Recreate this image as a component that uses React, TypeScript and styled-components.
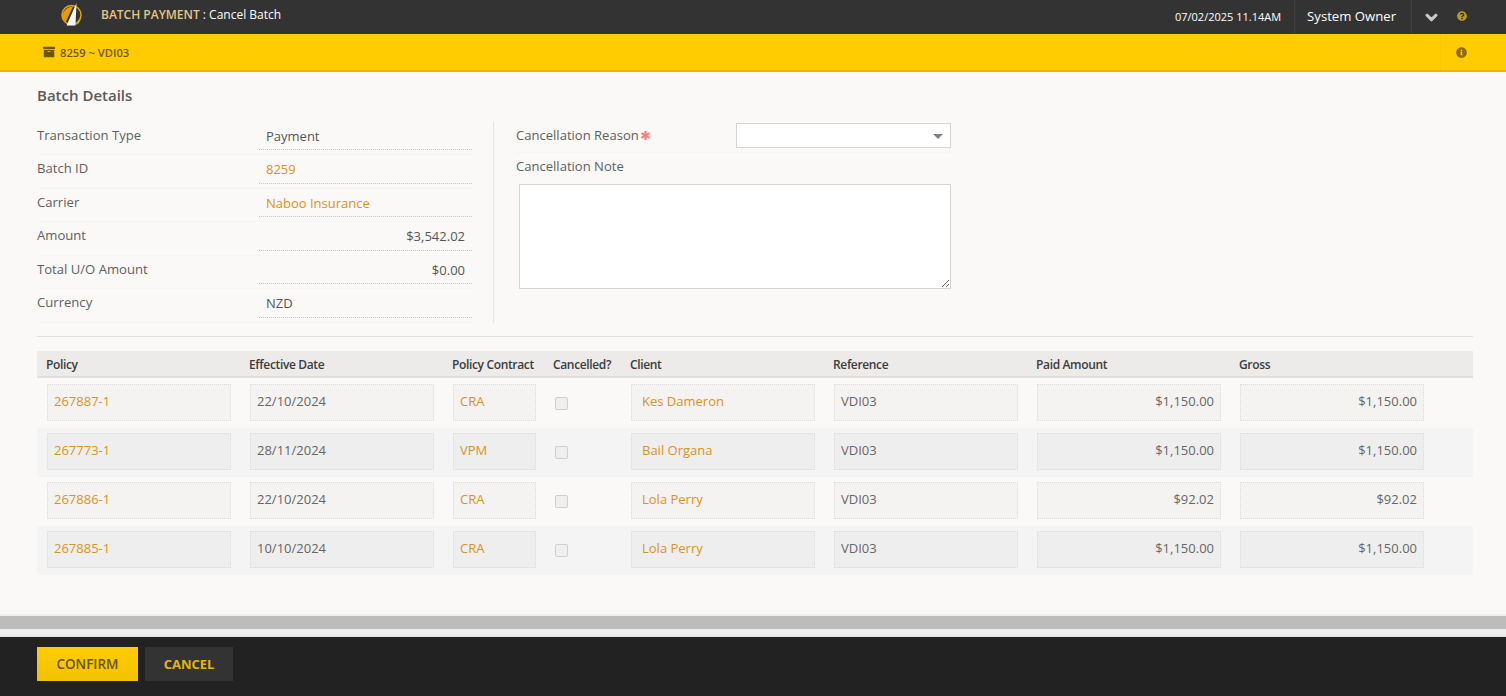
import styled, { createGlobalStyle } from "styled-components";
import { FaArchive, FaAsterisk, FaChevronDown, FaInfoCircle, FaQuestionCircle } from "react-icons/fa";

const details = [
  { label: "Transaction Type", value: "Payment" },
  { label: "Batch ID", value: "8259", link: true },
  { label: "Carrier", value: "Naboo Insurance", link: true },
  { label: "Amount", value: "$3,542.02", right: true },
  { label: "Total U/O Amount", value: "$0.00", right: true },
  { label: "Currency", value: "NZD" },
];

const rows = [
  { policy: "267887-1", date: "22/10/2024", contract: "CRA", client: "Kes Dameron", paid: "$1,150.00" },
  { policy: "267773-1", date: "28/11/2024", contract: "VPM", client: "Bail Organa", paid: "$1,150.00" },
  { policy: "267886-1", date: "22/10/2024", contract: "CRA", client: "Lola Perry", paid: "$92.02" },
  { policy: "267885-1", date: "10/10/2024", contract: "CRA", client: "Lola Perry", paid: "$1,150.00" },
];

const headers = ["Policy", "Effective Date", "Policy Contract", "Cancelled?", "Client", "Reference", "Paid Amount", "Gross"];

function App() {
  return (
    <Page>
      <GlobalStyle />
      <TopBar>
        <Brand>
          <Logo width="24" height="26" viewBox="0 0 24 26">
            <circle cx="11.5" cy="13" r="9.5" fill="none" stroke="#dba60f" strokeWidth="1.5" />
            <path d="M2 14C2.5 9 7.5 4.5 13 4.5L5.5 20.5C3.5 19 2 17 2 14Z" fill="#e89a06" />
            <path d="M16.5 1L15.5 23.5H6.5Z" fill="#f4f4f4" />
            <path d="M16 23L20.5 16C20.5 19 19 22 16 23Z" fill="#e3ae0e" />
          </Logo>
          <PageTitle>
            <b>BATCH PAYMENT</b> : Cancel Batch
          </PageTitle>
        </Brand>
        <TopRight>
          <DateText>07/02/2025 11.14AM</DateText>
          <UserName>System Owner</UserName>
          <MenuToggle>
            <BoldChevron size={13} />
          </MenuToggle>
          <HelpIcon>
            <FaQuestionCircle size={10} />
          </HelpIcon>
        </TopRight>
      </TopBar>

      <SubBar>
        <SubTitle>
          <FaArchive size={12} />
          8259 ~ VDI03
        </SubTitle>
        <InfoBox>
          <FaInfoCircle size={11} />
        </InfoBox>
      </SubBar>

      <Content>
        <SectionTitle>Batch Details</SectionTitle>
        <FormArea>
          <DetailList>
            {details.map((d) => (
              <DetailRow key={d.label}>
                <DetailLabel>{d.label}</DetailLabel>
                <DetailValue $link={d.link} $right={d.right}>{d.value}</DetailValue>
              </DetailRow>
            ))}
          </DetailList>
          <CancelForm>
            <ReasonRow>
              <FormLabel>
                Cancellation Reason
                <RequiredMark size={9} />
              </FormLabel>
              <SelectBox>
                <Caret />
              </SelectBox>
            </ReasonRow>
            <FormLabel>Cancellation Note</FormLabel>
            <NoteArea />
          </CancelForm>
        </FormArea>
        <Divider />
        <TableHead>
          {headers.map((h) => (
            <span key={h}>{h}</span>
          ))}
        </TableHead>
        {rows.map((r, i) => (
          <TableRow key={r.policy} $alt={i % 2 === 1}>
            <Cell $link>{r.policy}</Cell>
            <Cell>{r.date}</Cell>
            <Cell $link>{r.contract}</Cell>
            <CheckCell>
              <Check />
            </CheckCell>
            <Cell $link $indent>{r.client}</Cell>
            <Cell>VDI03</Cell>
            <Cell $right>{r.paid}</Cell>
            <Cell $right>{r.paid}</Cell>
          </TableRow>
        ))}
      </Content>

      <ScrollTrack />
      <Footer>
        <ConfirmButton>CONFIRM</ConfirmButton>
        <CancelButton>CANCEL</CancelButton>
      </Footer>
    </Page>
  );
}

const GlobalStyle = createGlobalStyle`
  html, body {
    margin: 0;
    padding: 0;
    overflow: hidden;
  }
  body {
    font-family: "Open Sans", "Liberation Sans", sans-serif;
    font-size: 13px;
    color: #555;
  }
`;

const Page = styled.div`
  display: flex;
  flex-direction: column;
  height: 696px;
  background: #faf9f7;
`;

const TopBar = styled.div`
  display: flex;
  justify-content: space-between;
  height: 34px;
  background: #333;
  color: #fff;
`;

const Brand = styled.div`
  display: flex;
  align-items: center;
  padding-left: 60px;
  gap: 17px;
`;

const Logo = styled.svg`
  display: block;
  margin-top: -4px;
`;

const PageTitle = styled.div`
  font-size: 12px;
  margin-top: -5px;

  b {
    color: #e3c782;
    font-weight: 600;
  }
`;

const TopRight = styled.div`
  display: flex;
  align-items: stretch;
`;

const DateText = styled.div`
  display: flex;
  align-items: center;
  font-size: 11px;
  padding: 0 13px 2px 0;
  border-right: 1px solid #3e3e3e;
`;

const UserName = styled.div`
  display: flex;
  align-items: center;
  font-size: 13.15px;
  padding: 0 15px 2px 12px;
  border-right: 1px solid #3e3e3e;
`;

const MenuToggle = styled.div`
  display: flex;
  align-items: center;
  padding-left: 13px;
  color: #ccc;
`;

const BoldChevron = styled(FaChevronDown)`
  stroke: currentColor;
  stroke-width: 40;
`;

const HelpIcon = styled.div`
  display: flex;
  align-items: center;
  padding: 0 39px 2px 19px;
  color: #bd9a1e;
`;

const SubBar = styled.div`
  display: flex;
  justify-content: space-between;
  align-items: center;
  height: 36px;
  padding: 0 39px 0 43px;
  background: #fecc00;
  border-bottom: 2px solid #e8b500;
  color: #8c6b07;
`;

const SubTitle = styled.div`
  display: flex;
  align-items: center;
  gap: 5px;
  font-size: 11.2px;
  font-weight: 600;
  color: #6e5500;
`;

const InfoBox = styled.div`
  display: flex;
  align-items: center;
  height: 36px;
  padding-left: 15px;
  border-left: 1px solid #f8c800;
`;

const Content = styled.div`
  flex: 1;
  padding: 14px 33px 0 37px;
`;

const SectionTitle = styled.div`
  font-size: 15px;
  font-weight: 600;
  line-height: 18px;
  color: #5a5a5a;
  margin-bottom: 18px;
`;

const FormArea = styled.div`
  display: flex;
  height: 201px;
`;

const DetailList = styled.div`
  width: 456px;
  height: 201.25px;
  margin-top: -0.25px;
  border-right: 1px solid #e4e3e0;
`;

const DetailRow = styled.div`
  display: grid;
  grid-template-columns: 222px 213px;
  box-sizing: border-box;
  width: 435px;
  height: 33.5px;
  border-bottom: 1px solid #f6f5f3;
`;

const DetailLabel = styled.div`
  font-size: 13.1px;
  line-height: 26px;
  color: #5f5f5f;
`;

const DetailValue = styled.div<{ $link?: boolean; $right?: boolean }>`
  box-sizing: border-box;
  font-size: 13px;
  line-height: 28px;
  height: 28.25px;
  padding: 0 7px;
  text-align: ${(p) => (p.$right ? "right" : "left")};
  color: ${(p) => (p.$link ? "#d9921f" : "#555")};
  border-bottom: 1px dotted #c4c4c4;
`;

const CancelForm = styled.div`
  display: flex;
  flex-direction: column;
  padding-left: 22px;
  width: 435px;
`;

const ReasonRow = styled.div`
  display: flex;
  justify-content: space-between;
  align-items: flex-start;
  height: 29px;
  margin: 1px 0 1px;
  border-bottom: 1px solid #f6f5f3;
`;

const FormLabel = styled.div`
  display: flex;
  align-items: center;
  gap: 2px;
  font-size: 13.05px;
  line-height: 25px;
  color: #5f5f5f;
`;

const RequiredMark = styled(FaAsterisk)`
  color: #f5827a;
  stroke: currentColor;
  stroke-width: 40;
`;

const SelectBox = styled.div`
  position: relative;
  width: 215px;
  height: 25px;
  box-sizing: border-box;
  background: #fff;
  border: 1px solid #d4d4d4;
`;

const Caret = styled.span`
  position: absolute;
  right: 7px;
  top: 10px;
  border-left: 5px solid transparent;
  border-right: 5px solid transparent;
  border-top: 5px solid #808080;
`;

const NoteArea = styled.textarea`
  display: block;
  width: 432px;
  height: 105px;
  box-sizing: border-box;
  margin: 5px 0 0 3px;
  padding: 4px;
  background: #fff;
  border: 1px solid #d4d4d4;
  border-radius: 0;
  outline: none;
`;

const Divider = styled.div`
  height: 1px;
  background: #e2e1de;
  margin: 13px 0 14px;
`;

const TableHead = styled.div`
  display: grid;
  grid-template-columns: 203px 203px 101px 77px 203px 203px 203px 203px;
  height: 25px;
  margin-bottom: 1px;
  padding-left: 9px;
  background: #ecebe9;
  border-bottom: 2px solid #e0e0de;
  font-size: 12px;
  letter-spacing: -0.35px;
  font-weight: 600;
  line-height: 27px;
  color: #3c3c3c;
  white-space: nowrap;
`;

const TableRow = styled.div<{ $alt?: boolean }>`
  display: grid;
  grid-template-columns: 203px 203px 102px 76px 203px 203px 203px 203px;
  align-items: center;
  box-sizing: border-box;
  height: 49px;
  padding: 0 0 2px 10px;
  background: ${(p) => (p.$alt ? "#f5f4f4" : "transparent")};
`;

const Cell = styled.div<{ $link?: boolean; $right?: boolean; $indent?: boolean }>`
  box-sizing: border-box;
  height: 37px;
  width: calc(100% - 19px);
  padding: 0 6px 0 ${(p) => (p.$indent ? "10px" : "6px")};
  font-size: 13px;
  line-height: 33px;
  text-align: ${(p) => (p.$right ? "right" : "left")};
  color: ${(p) => (p.$link ? "#d9921f" : "#666")};
  background: rgba(0, 0, 0, 0.025);
  border: 1px dotted #dcdcdc;
`;

const CheckCell = styled.div`
  display: flex;
  align-items: center;
  padding: 1px 0 0 0;
`;

const Check = styled.span`
  width: 13px;
  height: 13px;
  box-sizing: border-box;
  background: #f0efef;
  border: 1px solid #cfcfcf;
  border-radius: 2px;
`;

const ScrollTrack = styled.div`
  height: 13px;
  background: #bcbcbc;
  border-top: 2px solid #f0efee;
  border-bottom: 7px solid #eeeeee;
`;

const Footer = styled.div`
  display: flex;
  align-items: flex-start;
  gap: 7px;
  height: 60px;
  box-sizing: border-box;
  padding: 10px 0 0 37px;
  background: #222;
  border-top: 1px solid #e0e0e0;
`;

const ConfirmButton = styled.button`
  width: 101px;
  height: 34px;
  background: linear-gradient(#fecc00, #f2c200);
  border: none;
  padding: 0;
  font-family: inherit;
  font-size: 13.5px;
  font-weight: 600;
  color: #6b5200;
`;

const CancelButton = styled.button`
  width: 88px;
  height: 34px;
  background: #333;
  border: none;
  padding: 0;
  font-family: inherit;
  font-size: 13px;
  font-weight: 700;
  color: #e3b711;
`;

export default App;
